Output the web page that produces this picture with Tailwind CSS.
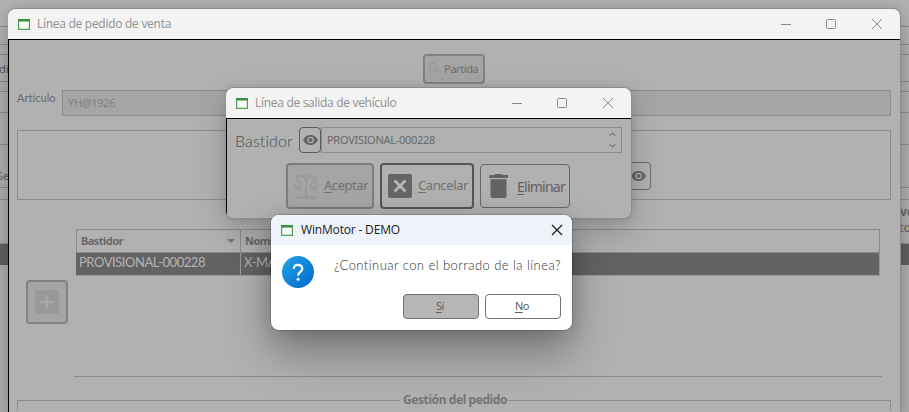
<!DOCTYPE html>
<html lang="es">
<head>
<meta charset="utf-8">
<title>WinMotor - DEMO</title>
<script src="https://cdn.jsdelivr.net/npm/@tailwindcss/browser@4"></script>
</head>
<body class="relative h-[412px] w-[909px] overflow-hidden bg-[#b1b1b1] font-['Noto_Sans',sans-serif] text-[#686868]">

<!-- Underlying order window, visible at both sides -->
<div class="flex h-full flex-col *:shrink-0 *:border-[#8c8c8c]">
  <div class="h-[26px]"></div>
  <div class="h-[18px] border-t"></div>
  <div class="h-[10px] border-t"></div>
  <div class="h-[27px] border-t pt-[6px] text-[11px] leading-[15px] text-[#555563]"><span class="-ml-[1px]">di</span></div>
  <div class="h-[10px] border-t"></div>
  <div class="h-[21px] border-t"></div>
  <div class="h-[32px] border-t"></div>
  <div class="h-[43px] border-t pt-[23px] text-[11px] leading-[15px]"><span class="-ml-[3px]">Se</span></div>
  <div class="h-[12px] border-t"></div>
  <div class="flex h-[44px] justify-end overflow-hidden border-t pt-[4px] text-[12px] leading-[16px] font-bold"><div class="w-[9px] whitespace-nowrap">ve<br><span class="-ml-[1px] font-medium">to</span></div></div>
  <div class="h-[22px] border-t bg-[#636363]"></div>
</div>

<!-- Línea de pedido de venta -->
<section class="absolute top-[8px] left-[8px] flex h-[404px] w-[893px] flex-col overflow-hidden rounded-t-[8px] border-t border-r border-[#8c8c8c] bg-[#b1b1b1] shadow-[0_18px_36px_rgba(0,0,0,0.2),0_0_9px_rgba(0,0,0,0.12)]">
  <header class="flex h-[30px] shrink-0 items-center bg-[#f3f3f3] pl-[10px] text-[#909090]">
    <svg class="h-[11px] w-[12px]" viewBox="0 0 12 11"><path d="M.6 1h10.8v9.400H.6z" fill="#f8fbf8" stroke="#4f9f54" stroke-width="1.2"/><path d="M0 0h12v2.600H0z" fill="#3d9142"/></svg>
    <h1 class="ml-[7px] font-['Open_Sans',sans-serif] text-[12px] tracking-[-0.28px]">Línea de pedido de venta</h1>
    <svg class="ml-auto mr-[17px] h-[12px] w-[104px]" viewBox="0 0 104 12" fill="none" stroke="#8b8b8b"><path d="M2 6.5h10"/><rect x="47.5" y="1.5" width="9" height="9" rx="1"/><path d="M93 1l10 10M103 1L93 11"/></svg>
  </header>
  <div class="flex min-h-0 flex-1 flex-col border-t border-l border-black pr-[9px] pl-[8px] *:shrink-0">
    <button class="mt-[14px] ml-[406px] flex h-[30px] w-[62px] items-center rounded-[4px] border-2 border-[#828282] bg-[#a5a5a5] pl-[3px] text-[11px] tracking-[-0.4px] text-[#6c6c6c]">
      <svg class="mt-[-3px] mr-[3px] h-[12px] w-[13px]" viewBox="0 0 13 12" fill="none" stroke="#999" stroke-width="1.5"><circle cx="5" cy="4.8" r="3.7"/><path d="M8 7.5l4 4"/></svg>Partida
    </button>
    <div class="mt-[6px] flex h-[26px]">
      <label class="w-[45px] pt-[1px] font-['Lato',sans-serif] text-[11px] leading-[14px] tracking-[0.05px]">Artículo</label>
      <div class="flex-1 border border-[#8c8c8c] bg-[#a5a5a5] pl-[5px] text-[11px] leading-[24px] tracking-[-0.33px] text-[#808080]">YH@1926</div>
    </div>
    <div class="mt-[14px] h-[70px] border border-[#8c8c8c] pt-[31px] pl-[607px]">
      <button class="flex h-[28px] w-[26px] items-center justify-center rounded-[4px] border border-[#686868]"><svg class="h-[10px] w-[15px]" viewBox="0 0 15 10"><path d="M0 5Q2.400 0 7.500 0T15 5Q12.600 10 7.500 10T0 5Z" fill="#646464"/><circle cx="7.500" cy="5" r="2.700" fill="#646464" stroke="#b1b1b1" stroke-width="1.300"/></svg></button>
    </div>
    <div class="mt-[29px] flex items-start">
      <button class="mt-[51px] ml-[9px] flex h-[44px] w-[42px] items-center justify-center rounded-[4px] border-2 border-[#828282] bg-[#a5a5a5]">
        <svg class="h-[24px] w-[24px]" viewBox="0 0 24 24"><rect width="24" height="24" rx="2" fill="#999"/><path d="M12 5v14M5 12h14" stroke="#a7a7a7" stroke-width="2.600"/></svg>
      </button>
      <div class="ml-[6px] h-[148px] w-[808px] border-b border-[#8c8c8c] pr-[2px] pl-[2px]">
        <div class="grid h-[24px] grid-cols-[164px_1fr] border border-[#8c8c8c] text-[11px] leading-[22px] font-bold tracking-[-0.55px]">
          <div class="flex items-center border-r border-[#8c8c8c] pl-[4px]">Bastidor<span class="mr-[5px] ml-auto border-x-[4px] border-t-[4px] border-x-transparent border-t-[#747474]"></span></div>
          <div class="pl-[4px]">Nombre</div>
        </div>
        <div class="grid h-[23px] grid-cols-[165px_1fr] border-r border-b border-[#999] bg-[#636363] font-['Lato',sans-serif] text-[13px] leading-[18px] tracking-[-0.45px] text-[#b4b4b4]">
          <div class="border-r border-[#999] pl-[3px]">PROVISIONAL-000228</div>
          <div class="pl-[3px]">X-MAX</div>
        </div>
      </div>
    </div>
    <fieldset class="mt-[14px] h-[20px] border border-b-0 border-[#8c8c8c]">
      <legend class="mx-auto pr-[1px] pl-[3px] text-center text-[12px] leading-[18px] font-bold tracking-[-0.42px] text-[#747474]">Gestión del pedido</legend>
    </fieldset>
  </div>
</section>

<!-- Línea de salida de vehículo -->
<section class="absolute top-[87px] left-[226px] flex h-[132px] w-[406px] flex-col overflow-hidden rounded-[8px] border-t border-r border-b border-[#8c8c8c] bg-[#b1b1b1] shadow-[0_12px_32px_rgba(0,0,0,0.2),0_0_6px_rgba(0,0,0,0.12)]">
  <header class="flex h-[30px] shrink-0 items-center bg-[#f3f3f3] pl-[10px] text-[#909090]">
    <svg class="h-[11px] w-[12px]" viewBox="0 0 12 11"><path d="M.6 1h10.8v9.400H.6z" fill="#f8fbf8" stroke="#4f9f54" stroke-width="1.2"/><path d="M0 0h12v2.600H0z" fill="#3d9142"/></svg>
    <h2 class="ml-[7px] font-['Open_Sans',sans-serif] text-[12px] tracking-[-0.3px]">Línea de salida de vehículo</h2>
    <svg class="ml-auto mr-[17px] h-[12px] w-[104px]" viewBox="0 0 104 12" fill="none" stroke="#8b8b8b"><path d="M2 6.500h10"/><rect x="47.500" y="1.500" width="9" height="9" rx="1"/><path d="M93 1l10 10M103 1L93 11"/></svg>
  </header>
  <div class="flex-1 border-t border-l border-black pt-[8px] pl-[8px]">
    <div class="flex h-[26px]">
      <label class="w-[64px] font-['Lato',sans-serif] text-[16px] leading-[27px] font-light tracking-[0.1px] text-[#505050]">Bastidor</label>
      <button class="flex h-[26px] w-[22px] items-center justify-center rounded-[4px] border border-[#5c5c5c]"><svg class="h-[10px] w-[15px]" viewBox="0 0 15 10"><path d="M0 5Q2.400 0 7.500 0T15 5Q12.600 10 7.500 10T0 5Z" fill="#646464"/><circle cx="7.500" cy="5" r="2.700" fill="#646464" stroke="#b1b1b1" stroke-width="1.300"/></svg></button>
      <div class="flex h-[26px] w-[301px] items-center border border-[#8c8c8c] pr-[5px] pl-[5px] text-[11px] tracking-[-0.28px]">PROVISIONAL-000228
        <svg class="ml-auto h-[16px] w-[7px]" viewBox="0 0 7 16" fill="none" stroke="#777" stroke-width="1.300"><path d="M.7 3.500l2.800-2.500 2.800 2.500M.7 12.500l2.800 2.500 2.800-2.500"/></svg>
      </div>
    </div>
    <div class="mt-[10px] ml-[51px] flex items-center gap-[6px]">
      <button class="flex h-[46px] w-[88px] items-center rounded-[4px] border-2 border-[#7d7d7d] bg-[#a5a5a5] pl-[5px] text-[13px] tracking-[-0.45px] text-[#707070]">
        <svg class="mr-[5px] h-[26px] w-[26px]" viewBox="0 0 26 26" fill="none" stroke="#999" stroke-width="2"><path d="M2 24.500h22M13 5v19M2.500 4.500Q6 2 11 3.500M15 3.500Q20 2 23.500 4.500"/><circle cx="13" cy="3.300" r="2.300" stroke-width="1.700"/><path d="M5 5L1.500 14M5 5l3.500 9M21 5l-3.500 9M21 5l3.500 9" stroke-width="1.500"/><path d="M.5 13.500h9q-1 4-4.500 4T.5 13.500zM16.500 13.500h9q-1 4-4.500 4t-4.500-4z" fill="#999" stroke="none"/></svg>
        <span><u class="underline-offset-2">A</u>ceptar</span>
      </button>
      <button class="flex h-[46px] w-[94px] items-center rounded-[4px] border-2 border-[#555] pl-[6px] text-[13px] tracking-[-0.4px] text-[#707070]">
        <svg class="mr-[6px] h-[24px] w-[24px]" viewBox="0 0 24 24"><rect width="24" height="24" rx="2" fill="#666"/><path d="M6.500 6.500l11 11M17.500 6.500l-11 11" stroke="#b5b5b5" stroke-width="2.800"/></svg>
        <span><u class="underline-offset-2">C</u>ancelar</span>
      </button>
      <button class="flex h-[44px] w-[90px] items-center rounded-[4px] border border-[#666] pl-[8px] text-[14px] tracking-[-0.75px] text-[#606060]">
        <svg class="mr-[9px] h-[24px] w-[19px]" viewBox="0 0 19 24" fill="#636363"><path d="M0 1h5l1.300-1h6.400L14 1h5v3H0zM1.500 5.300h16V22q0 2-2 2h-12q-2 0-2-2z"/></svg>
        <span><u class="underline-offset-2">E</u>liminar</span>
      </button>
    </div>
  </div>
</section>

<!-- Confirmation dialog -->
<section role="dialog" class="absolute top-[215px] left-[271px] h-[115px] w-[301px] rounded-[8px] bg-white shadow-[0_0_0_1px_rgba(0,0,0,0.15),0_22px_44px_rgba(0,0,0,0.34),0_2px_18px_rgba(0,0,0,0.14)]">
  <header class="flex h-[30px] items-center rounded-t-[8px] bg-[#eef3fa] pl-[10px] text-[#1a1a1a]">
    <svg class="h-[11px] w-[12px]" viewBox="0 0 12 11"><path d="M.6 1h10.8v9.400H.6z" fill="#f8fbf8" stroke="#4f9f54" stroke-width="1.2"/><path d="M0 0h12v2.600H0z" fill="#3d9142"/></svg>
    <h2 class="ml-[8px] font-['Open_Sans',sans-serif] text-[12px] tracking-[-0.17px]">WinMotor - DEMO</h2>
    <svg class="mr-[9px] ml-auto h-[12px] w-[12px]" viewBox="0 0 12 12" fill="none" stroke="#1a1a1a" stroke-width="1.200"><path d="M1 1l10 10M11 1L1 11"/></svg>
  </header>
  <div class="flex h-[49px] pt-[11px] pl-[11px]">
    <svg class="h-[32px] w-[32px]" viewBox="0 0 32 32"><defs><linearGradient id="q" x1="0" y1="0" x2="1" y2="1"><stop stop-color="#22a3e8"/><stop offset="1" stop-color="#0069cb"/></linearGradient></defs><circle cx="16" cy="16" r="16" fill="url(#q)"/><path d="M11.800 12.700Q12 8.800 16 8.800t4.300 3.700q0 2-2.100 3.500-2.100 1.400-2.100 3.800" fill="none" stroke="#fff" stroke-width="2.200"/><circle cx="16.100" cy="23.300" r="1.500" fill="#fff"/></svg>
    <p class="ml-[20px] font-['Lato',sans-serif] text-[13px] leading-[18px] font-light tracking-[0.44px] whitespace-nowrap text-[#333]">¿Continuar con el borrado de la línea?</p>
  </div>
  <div class="flex justify-end gap-[6px] pr-[11px] text-[11px] tracking-[-0.5px] text-[#5c5c5c]">
    <button class="h-[25px] w-[76px] rounded-[4px] border border-[#727272] bg-[#b6b6b6] pr-[2px]"><u class="underline-offset-2">S</u>í</button>
    <button class="h-[25px] w-[76px] rounded-[4px] border border-[#727272] bg-white pr-[2px]"><u class="underline-offset-2">N</u>o</button>
  </div>
</section>
</body>
</html>
